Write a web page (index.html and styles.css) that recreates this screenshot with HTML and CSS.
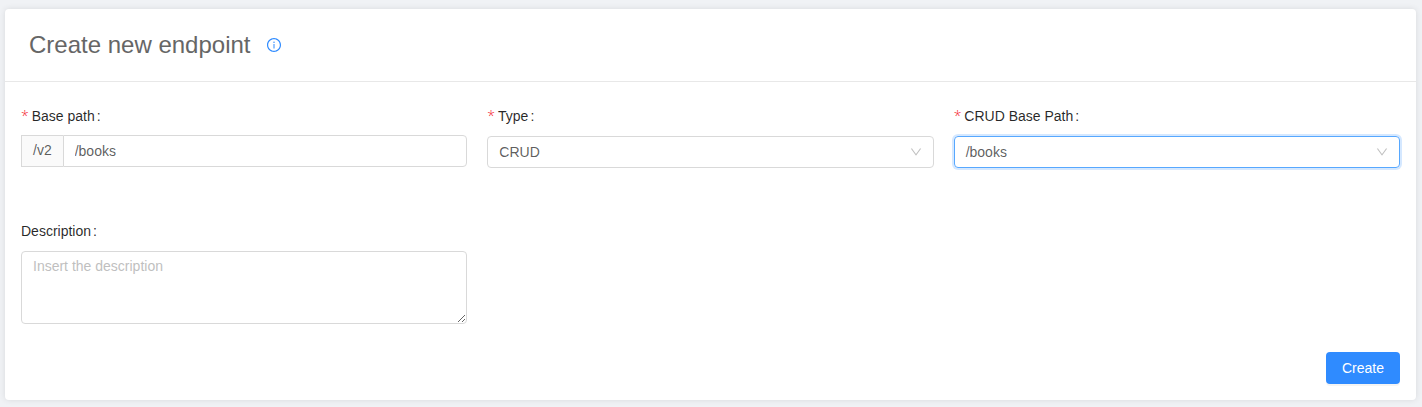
FILE: index.html
```html
<!DOCTYPE html>
<html lang="en">
<head>
<meta charset="utf-8">
<title>Create new endpoint</title>
<link rel="stylesheet" href="styles.css">
</head>
<body>
<main class="card">
  <header class="card-header">
    <h1 class="title">Create new endpoint</h1>
    <svg class="info" viewBox="64 64 896 896" fill="currentColor"><path d="M512 64C264.600 64 64 264.600 64 512s200.600 448 448 448 448-200.600 448-448S759.400 64 512 64zm0 820c-205.400 0-372-166.600-372-372s166.600-372 372-372 372 166.600 372 372-166.600 372-372 372z"/><path d="M464 336a48 48 0 1 0 96 0 48 48 0 1 0-96 0zm72 112h-48c-4.400 0-8 3.600-8 8v272c0 4.400 3.600 8 8 8h48c4.400 0 8-3.600 8-8V456c0-4.400-3.600-8-8-8z"/></svg>
  </header>
  <form class="form">
    <div class="row">
      <div class="field">
        <label class="label required" for="base">Base path</label>
        <div class="input-group">
          <span class="addon">/v2</span>
          <input class="input" id="base" type="text" value="/books">
        </div>
      </div>
      <div class="field">
        <span class="label required">Type</span>
        <div class="select">
          <span>CRUD</span>
          <svg class="arrow" viewBox="64 64 896 896" fill="currentColor"><path d="M884 256h-75c-5.100 0-9.900 2.500-12.900 6.600L512 654.200 227.900 262.600c-3-4.100-7.800-6.600-12.900-6.600h-75c-6.500 0-10.300 7.400-6.500 12.700l352.600 486.100c12.800 17.600 39 17.600 51.700 0l352.600-486.100c3.900-5.300.1-12.700-6.400-12.700z"/></svg>
        </div>
      </div>
      <div class="field">
        <span class="label required">CRUD Base Path</span>
        <div class="select focused">
          <span>/books</span>
          <svg class="arrow" viewBox="64 64 896 896" fill="currentColor"><path d="M884 256h-75c-5.100 0-9.900 2.500-12.900 6.600L512 654.200 227.900 262.600c-3-4.100-7.800-6.600-12.900-6.600h-75c-6.500 0-10.300 7.400-6.500 12.700l352.600 486.100c12.800 17.600 39 17.600 51.700 0l352.600-486.100c3.900-5.300.1-12.700-6.400-12.700z"/></svg>
        </div>
      </div>
    </div>
    <div class="row row-description">
      <div class="field">
        <label class="label" for="description">Description</label>
        <textarea class="textarea" id="description" placeholder="Insert the description"></textarea>
      </div>
    </div>
    <div class="actions"><button class="button" type="button">Create</button></div>
  </form>
</main>
</body>
</html>
```
FILE: styles.css
```css
* {
  box-sizing: border-box;
}

body {
  margin: 0;
  padding: 9px 6px 7px 5px;
  height: 407px;
  overflow: hidden;
  background: #f0f2f5;
  color: rgba(0, 0, 0, 0.65);
  font: 14px/21px "Liberation Sans", Arial, sans-serif;
}

.card {
  height: 391px;
  background: #fff;
  border-radius: 4px;
  box-shadow: 0 0 6px rgba(0, 0, 0, 0.1);
}

.card-header {
  display: flex;
  align-items: center;
  height: 73px;
  padding: 0 24px;
  border-bottom: 1px solid #e8e8e8;
}

.title {
  margin: 0;
  color: #666;
  font-size: 24px;
  font-weight: 400;
  line-height: 36px;
}

.info {
  width: 14px;
  height: 14px;
  margin-left: 17px;
  color: #2f8bff;
}

.form {
  padding: 24px 16px 0;
}

.row {
  display: grid;
  grid-template-columns: repeat(3, 1fr);
  gap: 20px;
  height: 115px;
}

.row-description {
  height: 131px;
}

.label {
  display: block;
  height: 21px;
  color: rgba(0, 0, 0, 0.85);
}

.label::after {
  content: ":";
  margin-left: 2px;
}

.required::before {
  content: "*";
  display: inline-block;
  width: 7px;
  margin-right: 3.700px;
  color: #f5222d;
  font-family: "Open Sans", "Noto Sans", sans-serif;
  font-weight: 300;
  line-height: 1;
}

.input-group {
  display: flex;
  height: 32px;
  margin-top: 8px;
}

.addon {
  padding: 4px 11px;
  border: 1px solid #d9d9d9;
  border-right: 0;
  background: #fafafa;
}

.input {
  flex: 1;
  min-width: 0;
  padding: 4px 11px;
  border: 1px solid #d9d9d9;
  border-radius: 0 4px 4px 0;
  outline: 0;
  color: inherit;
  font: inherit;
}

.select {
  display: flex;
  align-items: center;
  justify-content: space-between;
  height: 32px;
  margin-top: 9px;
  padding: 0 11px;
  border: 1px solid #d9d9d9;
  border-radius: 4px;
}

.focused {
  border-color: #57a8ff;
  box-shadow: 0 0 0 2px rgba(47, 139, 255, 0.2);
}

.arrow {
  width: 12px;
  height: 12px;
  color: rgba(0, 0, 0, 0.25);
}

.textarea {
  display: block;
  width: 100%;
  height: 73px;
  margin-top: 9px;
  padding: 4px 11px;
  border: 1px solid #d9d9d9;
  border-radius: 4px;
  outline: 0;
  color: inherit;
  font: inherit;
  resize: vertical;
}

.textarea::placeholder {
  color: #bfbfbf;
}

.actions {
  display: flex;
  justify-content: flex-end;
}

.button {
  width: 74px;
  height: 32px;
  padding: 0;
  border: 0;
  border-radius: 4px;
  background: #2f8bff;
  box-shadow: 0 2px 0 rgba(0, 0, 0, 0.045);
  color: #fff;
  font: inherit;
}
```
